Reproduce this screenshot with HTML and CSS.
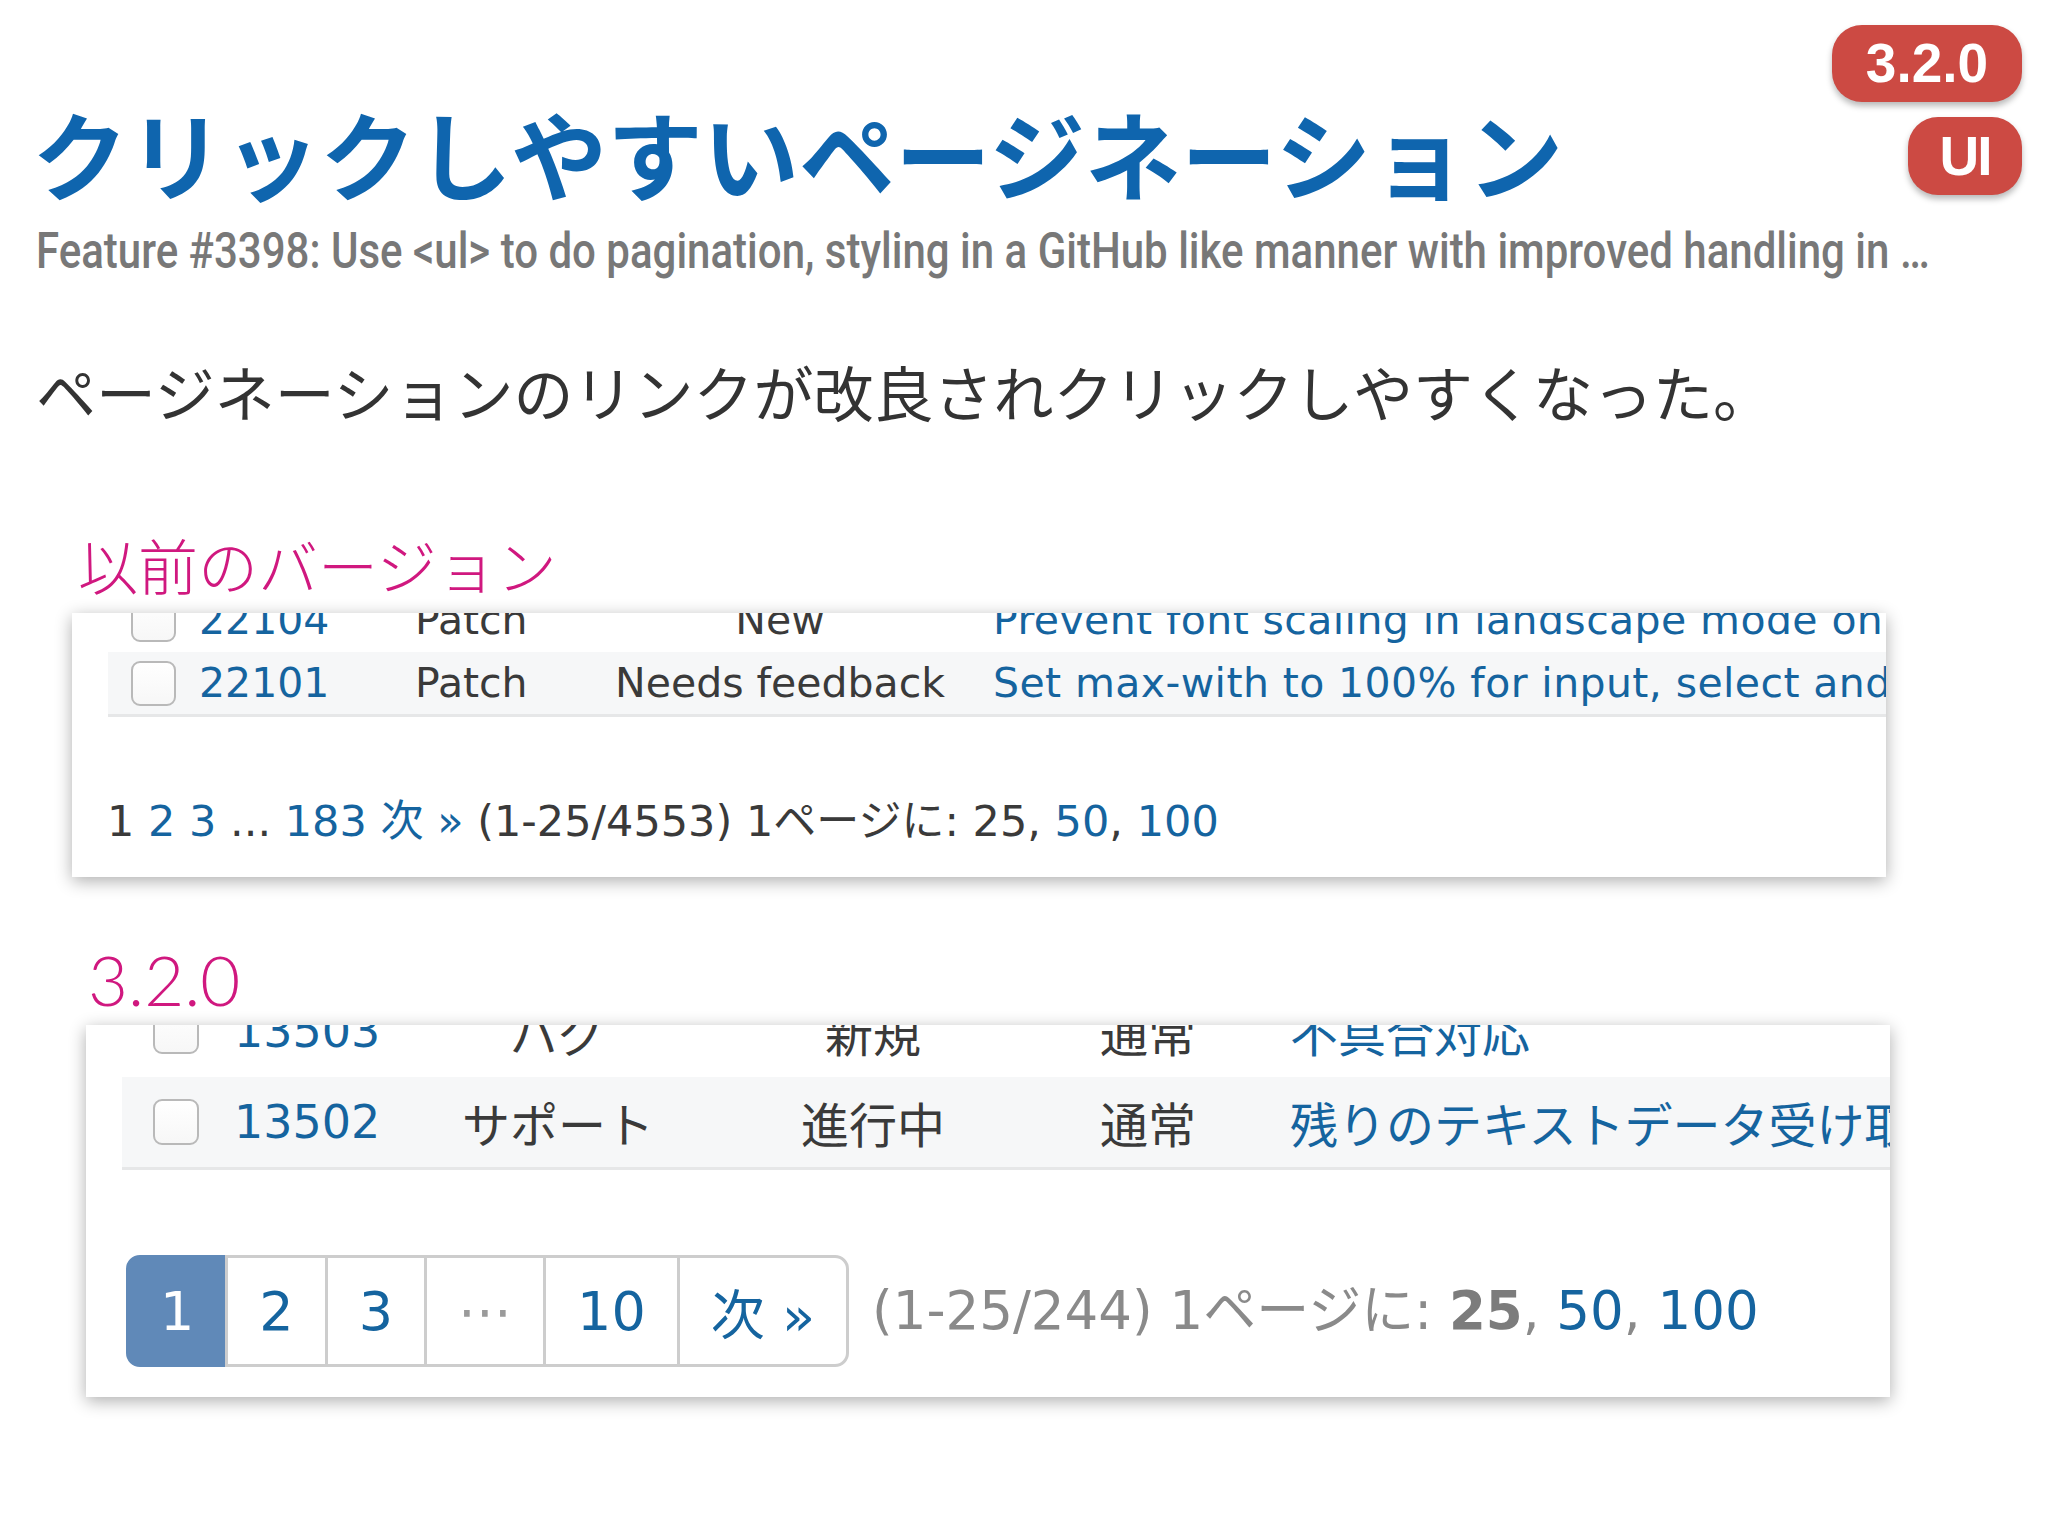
FILE: index.html
```html
<!DOCTYPE html>
<html lang="ja">
<head>
<meta charset="utf-8">
<title>クリックしやすいページネーション</title>
<link rel="stylesheet" href="styles.css">
</head>
<body>
<div class="slide">
  <div class="badges">
    <span class="badge badge-ver">3.2.0</span>
    <span class="badge badge-ui">UI</span>
  </div>

  <h1 class="title">クリックしやすいページネーション</h1>
  <div class="subtitle"><span class="subtitle-inner">Feature #3398: Use &lt;ul&gt; to do pagination, styling in a GitHub like manner with improved handling in …</span></div>

  <p class="lead">ページネーションのリンクが改良されクリックしやすくなった。</p>

  <div class="label label-old">以前のバージョン</div>
  <div class="panel panel-old">
    <div class="rows">
      <div class="row">
        <span class="cell cb"><span class="checkbox"></span></span>
        <span class="cell id link">22104</span>
        <span class="cell tracker">Patch</span>
        <span class="cell status">New</span>
        <span class="cell subject link">Prevent font scaling in landscape mode on iOS</span>
      </div>
      <div class="row row-odd">
        <span class="cell cb"><span class="checkbox"></span></span>
        <span class="cell id link">22101</span>
        <span class="cell tracker">Patch</span>
        <span class="cell status">Needs feedback</span>
        <span class="cell subject link">Set max-with to 100% for input, select and textarea</span>
      </div>
    </div>
    <div class="old-pager">
      <span>1</span> <span class="link">2</span> <span class="link">3</span> ... <span class="link">183</span> <span class="link">次 »</span> (1-25/4553) 1ページに: 25, <span class="link">50</span>, <span class="link">100</span>
    </div>
  </div>

  <div class="label label-new">3.2.0</div>
  <div class="panel panel-new">
    <div class="rows">
      <div class="row">
        <span class="cell cb"><span class="checkbox"></span></span>
        <span class="cell id link">13503</span>
        <span class="cell tracker">バグ</span>
        <span class="cell status">新規</span>
        <span class="cell priority">通常</span>
        <span class="cell subject link">不具合対応</span>
      </div>
      <div class="row row-odd">
        <span class="cell cb"><span class="checkbox"></span></span>
        <span class="cell id link">13502</span>
        <span class="cell tracker">サポート</span>
        <span class="cell status">進行中</span>
        <span class="cell priority">通常</span>
        <span class="cell subject link">残りのテキストデータ受け取り</span>
      </div>
    </div>
    <div class="new-pager">
      <ul class="pages">
        <li class="page current">1</li>
        <li class="page">2</li>
        <li class="page">3</li>
        <li class="page spacer">⋯</li>
        <li class="page">10</li>
        <li class="page">次 »</li>
      </ul>
      <span class="pager-info">(1-25/244) 1ページに: <b>25</b>, <span class="link">50</span>, <span class="link">100</span></span>
    </div>
  </div>
</div>
</body>
</html>
```

FILE: styles.css
```css
html, body {
  margin: 0;
  padding: 0;
  background: #ffffff;
}

body {
  width: 2048px;
  height: 1536px;
  overflow: hidden;
  font-family: "Noto Sans CJK JP", "Noto Sans", sans-serif;
}

.slide {
  position: relative;
  width: 2048px;
  height: 1536px;
  padding-top: 104px;
  box-sizing: border-box;
}

/* badges in top-right corner */
.badges {
  position: absolute;
  top: 25px;
  right: 26px;
  display: flex;
  flex-direction: column;
  align-items: flex-end;
  gap: 15px;
}

.badge {
  display: flex;
  align-items: center;
  justify-content: center;
  background: #cc4a43;
  color: #ffffff;
  font-family: "Liberation Sans", Arial, sans-serif;
  font-weight: 700;
  font-size: 55px;
  line-height: 1;
  border-radius: 30px;
  box-shadow: 0 4px 6px rgba(0, 0, 0, 0.28);
}

.badge-ver {
  width: 190px;
  height: 77px;
}

.badge-ui {
  width: 114px;
  height: 78px;
  letter-spacing: -2px;
}

/* headings */
.title {
  margin: 0;
  padding-left: 32px;
  font-family: "Noto Sans CJK JP", sans-serif;
  font-weight: 700;
  font-size: 96px;
  line-height: 95px;
  color: #0f65ae;
  white-space: nowrap;
}

.subtitle {
  margin-top: 27px;
  padding-left: 36px;
  height: 50px;
  white-space: nowrap;
}

.subtitle-inner {
  display: inline-block;
  font-family: Roboto, "Noto Sans", sans-serif;
  font-weight: 500;
  font-size: 50px;
  line-height: 50px;
  color: #787878;
  transform: scaleX(0.84);
  transform-origin: left center;
}

.lead {
  margin: 85px 0 0 0;
  padding-left: 36px;
  font-size: 60px;
  line-height: 60px;
  font-weight: 400;
  color: #333333;
  white-space: nowrap;
}

.label {
  color: #d0187f;
  white-space: nowrap;
}

.label-old {
  margin-top: 113px;
  padding-left: 78px;
  font-family: "Noto Sans CJK JP", sans-serif;
  font-weight: 300;
  font-size: 60px;
  line-height: 60px;
}

.label-new {
  margin-top: 68px;
  padding-left: 88px;
  font-family: Lato, "Noto Sans", sans-serif;
  font-weight: 300;
  font-size: 69px;
  line-height: 70px;
}

/* panels */
.panel {
  background: #ffffff;
  box-shadow: 0 4px 16px rgba(0, 0, 0, 0.32);
  overflow: hidden;
  font-family: "DejaVu Sans", Verdana, "Noto Sans CJK JP", sans-serif;
  color: #3a3a3a;
}

.panel-old {
  margin-top: 19px;
  margin-left: 72px;
  width: 1814px;
  height: 264px;
  font-size: 41px;
}

.panel-new {
  margin-top: 10px;
  margin-left: 86px;
  width: 1804px;
  height: 372px;
  font-size: 48px;
}

.link {
  color: #15649f;
}

.row {
  display: grid;
  align-items: center;
  white-space: nowrap;
  box-sizing: border-box;
  background: #ffffff;
}

.row-odd {
  background: #f6f7f8;
  border-bottom: 3px solid #e6e7e8;
}

.cell {
  display: block;
  overflow: visible;
}

.checkbox {
  display: block;
  box-sizing: border-box;
  width: 45px;
  height: 45px;
  border: 2px solid #b9b9b9;
  border-radius: 9px;
  background: linear-gradient(#ffffff, #f7f7f7);
}

.status, .priority {
  text-align: center;
}

/* old panel table */
.panel-old .rows {
  margin-top: -26px;
  margin-left: 36px;
}

.panel-old .row {
  grid-template-columns: 91px 216px 160px 410px auto;
  height: 65px;
}

.panel-old .cb .checkbox {
  margin-left: 23px;
}

.panel-old .subject {
  padding-left: 8px;
  letter-spacing: 0.4px;
}

.old-pager {
  margin-top: 79px;
  margin-left: 35px;
  font-size: 43px;
  line-height: 50px;
  white-space: nowrap;
  color: #3a3a3a;
}

/* new panel table */
.panel-new .rows {
  margin-top: -41px;
  margin-left: 36px;
}

.panel-new .row {
  grid-template-columns: 112px 216px 216px 414px 136px auto;
  height: 93px;
}

.panel-new .id {
  font-size: 46px;
}

.panel-new .tracker {
  text-align: center;
}

.panel-new .cb .checkbox {
  margin-left: 31px;
  width: 46px;
  height: 46px;
}

.panel-new .subject {
  padding-left: 74px;
}

.new-pager {
  margin-top: 85px;
  margin-left: 40px;
  display: flex;
  align-items: center;
  white-space: nowrap;
}

.pages {
  display: flex;
  margin: 0;
  padding: 0;
  list-style: none;
}

.page {
  display: flex;
  align-items: center;
  justify-content: center;
  box-sizing: border-box;
  height: 112px;
  padding: 0 31px;
  border: 3px solid #cdcdcd;
  margin-left: -3px;
  font-size: 54px;
  color: #15649f;
  background: #ffffff;
}

.page:first-child {
  margin-left: 0;
  border-radius: 14px 0 0 14px;
}

.page:last-child {
  border-radius: 0 14px 14px 0;
}

.page.current {
  background: #6089b8;
  border-color: #6089b8;
  color: #ffffff;
}

.page.spacer {
  color: #9a9a9a;
}

.pager-info {
  margin-left: 23px;
  padding-bottom: 10px;
  font-size: 53px;
  color: #8a8a8a;
}

.pager-info b {
  font-weight: 700;
  color: #7c7c7c;
}
```
